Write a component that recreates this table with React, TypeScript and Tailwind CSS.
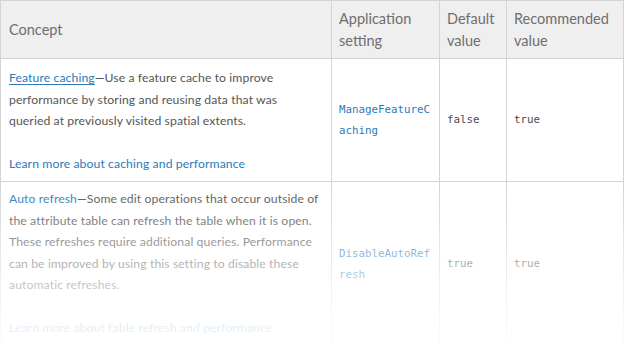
import React from "react";

export default function App() {
  const body = "font-['Lato','Open_Sans',sans-serif]";
  const mono = "font-['DejaVu_Sans_Mono','Liberation_Mono',monospace]";
  return (
    <div className={`relative w-[624px] h-[345px] overflow-hidden bg-white ${body}`}>
      <table className="table-fixed border-collapse w-[623px] text-[#555555]">
        <colgroup>
          <col className="w-[331px]" />
          <col className="w-[108px]" />
          <col className="w-[67px]" />
          <col className="w-[117px]" />
        </colgroup>
        <thead>
          <tr className="bg-[#efefef] h-[58px] text-[14.5px] leading-[22px] text-[#6e6e6e]">
            <th className="border border-[#d4d4d4] px-2 text-left font-normal align-middle">Concept</th>
            <th className="border border-[#d4d4d4] px-[7px] text-left font-normal align-middle">Application setting</th>
            <th className="border border-[#d4d4d4] px-[7px] text-left font-normal align-middle">Default value</th>
            <th className="border border-[#d4d4d4] px-[7px] text-left font-normal align-middle">Recommended value</th>
          </tr>
        </thead>
        <tbody className="text-[12.2px] leading-[21.5px] tracking-[0.1px]">
          <tr className="h-[123px]">
            <td className="border border-[#d4d4d4] pl-2 pr-[10px] pt-[2px] align-middle">
              <p>
                <span className="text-[#2b7bb9] underline underline-offset-2">Feature caching</span>—Use a feature cache to improve performance by storing and reusing data that was queried at previously visited spatial extents.
              </p>
              <p className="mt-[21.5px] text-[#2b7bb9]">Learn more about caching and performance</p>
            </td>
            <td className={`border border-[#d4d4d4] px-[7px] align-middle break-all text-[10.8px] leading-[21px] tracking-normal text-[#2b7bb9] ${mono}`}>ManageFeatureCaching</td>
            <td className={`border border-[#d4d4d4] px-[7px] align-middle text-[10.8px] tracking-normal text-[#4c4c4c] ${mono}`}>false</td>
            <td className={`border border-[#d4d4d4] px-[7px] align-middle text-[10.8px] tracking-normal text-[#4c4c4c] ${mono}`}>true</td>
          </tr>
          <tr className="h-[164px]">
            <td className="border border-[#d4d4d4] pl-2 pr-[10px] pt-[6px] pb-[7px] align-top">
              <p>
                <span className="text-[#2b7bb9]">Auto refresh</span>—Some edit operations that occur outside of the attribute table can refresh the table when it is open. These refreshes require additional queries. Performance can be improved by using this setting to disable these automatic refreshes.
              </p>
              <p className="mt-[21.5px] text-[#2b7bb9]">Learn more about table refresh and performance</p>
            </td>
            <td className={`border border-[#d4d4d4] px-[7px] align-middle break-all text-[10.8px] leading-[21px] tracking-normal text-[#2b7bb9] ${mono}`}>DisableAutoRefresh</td>
            <td className={`border border-[#d4d4d4] px-[7px] align-middle text-[10.8px] tracking-normal text-[#4c4c4c] ${mono}`}>true</td>
            <td className={`border border-[#d4d4d4] px-[7px] align-middle text-[10.8px] tracking-normal text-[#4c4c4c] ${mono}`}>true</td>
          </tr>
        </tbody>
      </table>
      <div className="pointer-events-none absolute left-0 right-0 top-[184px] bottom-0 bg-gradient-to-b from-white/0 via-white/55 to-white/95" />
    </div>
  );
}
